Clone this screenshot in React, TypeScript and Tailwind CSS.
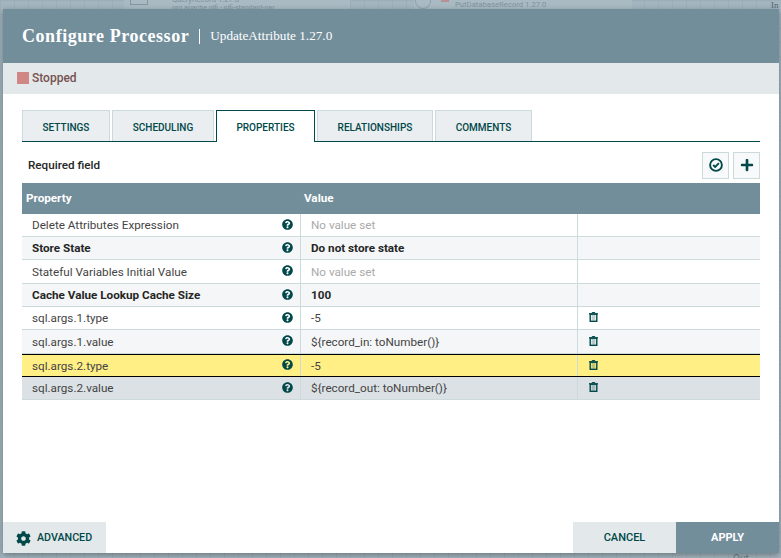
import { FaCog, FaPlus, FaQuestionCircle } from "react-icons/fa";

const tabs = [
  { name: "SETTINGS", width: "w-[88px]" },
  { name: "SCHEDULING", width: "w-[102px]" },
  { name: "PROPERTIES", width: "w-[99px]", active: true },
  { name: "RELATIONSHIPS", width: "w-[116px]" },
  { name: "COMMENTS", width: "w-[97px]" },
];

const rows = [
  { name: "Delete Attributes Expression", value: "No value set", empty: true, h: "h-[23px]", bg: "bg-white" },
  { name: "Store State", value: "Do not store state", bold: true, h: "h-[23px]", bg: "bg-[#f4f6f7]" },
  { name: "Stateful Variables Initial Value", value: "No value set", empty: true, h: "h-[24px]", bg: "bg-white" },
  { name: "Cache Value Lookup Cache Size", value: "100", bold: true, h: "h-[23px]", bg: "bg-[#f4f6f7]" },
  { name: "sql.args.1.type", value: "-5", del: true, h: "h-[23px]", bg: "bg-white" },
  { name: "sql.args.1.value", value: "${record_in: toNumber()}", del: true, h: "h-[24px]", bg: "bg-[#f4f6f7]" },
  { name: "sql.args.2.type", value: "-5", del: true, selected: true, h: "h-[23px]", bg: "bg-[#ffef85]" },
  { name: "sql.args.2.value", value: "${record_out: toNumber()}", del: true, h: "h-[23px]", bg: "bg-[#dbe1e4]" },
];

function TrashIcon() {
  return (
    <svg width="9" height="10" viewBox="0 0 9 10" className="mb-[2px] text-[#004849]">
      <path d="M2.8 1.2 L3.2 0.5 H5.8 L6.2 1.2" fill="none" stroke="currentColor" strokeWidth="1" />
      <rect x="0" y="1.2" width="9" height="1.2" fill="currentColor" />
      <rect x="1.2" y="2.2" width="6.6" height="7.1" fill="none" stroke="currentColor" strokeWidth="1.4" />
      <rect x="2.6" y="3" width="3.8" height="5.6" fill="currentColor" fillOpacity="0.25" />
    </svg>
  );
}

function CheckIcon() {
  return (
    <svg width="14" height="14" viewBox="0 0 14 14" fill="none" stroke="currentColor">
      <circle cx="7" cy="7" r="5.9" strokeWidth="1.9" />
      <path d="M4.2 7 L6.2 9 L9.9 5.2" strokeWidth="1.9" />
    </svg>
  );
}

export default function App() {
  return (
    <div className="relative h-[558px] w-[781px] overflow-hidden bg-[#a3b5bf] bg-[linear-gradient(#9cafb9_1px,transparent_1px),linear-gradient(90deg,#9cafb9_1px,transparent_1px)] bg-[size:14px_14px] pl-[3px] pt-[9px] font-['Roboto',sans-serif]">
      {/* canvas behind the dialog */}
      <div className="absolute left-[124px] top-0 h-[9px] w-[226px] bg-[#a9bac3]" />
      <div className="absolute left-[414px] top-0 h-[9px] w-[218px] bg-[#a9bac3]" />
      <div className="absolute left-[130px] top-0 h-[5px] w-[18px] border-x border-b border-[#8396a0]" />
      <div className="absolute left-[415px] top-0 h-[9px] w-[16px] rounded-b-full border-x border-b border-[#8fa2ac]" />
      <div className="absolute left-[441px] top-0 h-[2px] w-[8px] bg-[#b88f95]" />
      <div className="absolute left-[172px] top-[-4px] text-[7.7px] leading-[8px] text-[#7f929c]">QueryRecord 1.27.0</div>
      <div className="absolute left-[172px] top-[4px] text-[7px] leading-[8px] text-[#7f929c]">org.apache.nifi - nifi-standard-nar</div>
      <div className="absolute left-[455px] top-[1px] text-[7.7px] leading-[8px] text-[#7f929c]">PutDatabaseRecord 1.27.0</div>
      <div className="absolute left-[771px] top-[1px] font-['Liberation_Serif',serif] text-[9px] leading-[9px] text-[#55666f]">In</div>
      <div className="absolute left-[733px] top-[553px] text-[10px] leading-[12px] text-[#6f828c]">Out</div>

      <div className="relative flex h-[544px] w-[776px] flex-col bg-white shadow-[0_2px_6px_rgba(0,0,0,0.35)]">
        <div className="flex h-[54px] items-center bg-[#728e9b] pl-[19px] text-white">
          <span className="font-['Liberation_Serif',serif] text-[18px] font-bold leading-none tracking-[0.55px]">Configure Processor</span>
          <span className="ml-[10px] h-[15px] w-px bg-white" />
          <span className="ml-[10px] font-['Liberation_Serif',serif] text-[13.2px] leading-none">UpdateAttribute 1.27.0</span>
        </div>

        <div className="flex h-[31px] items-center bg-[#e3e8eb] pb-[2px] pl-[14px]">
          <span className="h-3 w-3 bg-[#d18686]" />
          <span className="ml-[3px] text-xs font-medium text-[#775351]">Stopped</span>
        </div>

        <div className="flex flex-1 flex-col px-[19px] pt-4">
          <div className="flex h-[32px] gap-[2px] border-b border-[#004849]">
            {tabs.map((tab) => (
              <div
                key={tab.name}
                className={`flex items-center justify-center pt-[2px] text-[10px] font-medium text-[#004849] ${tab.width} ${
                  tab.active
                    ? "-mb-px border border-b-0 border-[#004849] bg-white"
                    : "border border-b-0 border-[#cddadb] bg-[#eaeef0]"
                }`}
              >
                {tab.name}
              </div>
            ))}
          </div>

          <div className="flex h-[41px] items-center justify-between pt-[5px]">
            <span className="pl-[6px] pt-[2px] text-[11.7px] font-medium text-[#262626]">Required field</span>
            <div className="flex gap-1">
              <button className="flex h-[27px] w-[27px] items-center justify-center border border-[#cddadb] bg-[#f8f9fa] text-[#004849]">
                <CheckIcon />
              </button>
              <button className="flex h-[27px] w-[27px] items-center justify-center border border-[#cddadb] bg-[#f8f9fa] text-[#004849]">
                <FaPlus className="text-sm" />
              </button>
            </div>
          </div>

          <div className="grid h-[31px] grid-cols-[278px_460px] items-center bg-[#728e9b] text-[11.7px] font-bold text-white">
            <span className="pl-1">Property</span>
            <span className="pl-[4px]">Value</span>
          </div>

          {rows.map((row) => (
            <div
              key={row.name}
              className={`grid grid-cols-[278px_277px_183px] border-b text-[11.7px] ${row.h} ${row.bg} ${
                row.selected ? "border-y border-black" : "border-[#cddadb]"
              }`}
            >
              <div className={`flex items-center justify-between pl-[10px] pr-[7px] ${row.bold ? "font-bold text-[#262626]" : "text-[#444444]"}`}>
                <span className="pt-[2px]">{row.name}</span>
                <FaQuestionCircle className="mb-[2px] text-[11px] text-[#004849]" />
              </div>
              <div
                className={`flex items-center border-l border-[#cddadb] pl-[10px] pt-[2px] ${
                  row.empty ? "text-[#aaaaaa]" : row.bold ? "font-bold text-[#262626]" : "text-[#444444]"
                }`}
              >
                {row.value}
              </div>
              <div className="flex items-center border-l border-[#cddadb] pl-[11px]">
                {row.del && <TrashIcon />}
              </div>
            </div>
          ))}
        </div>

        <div className="flex h-[31px] items-stretch justify-between">
          <div className="flex w-[103px] items-center gap-[6px] bg-[#e3e8eb] pl-[13px] pt-[2px] text-[10.7px] font-medium text-[#004849]">
            <FaCog className="text-[15px]" />
            ADVANCED
          </div>
          <div className="flex">
            <div className="flex w-[103px] items-center justify-center bg-[#e3e8eb] pt-px text-[11px] font-medium text-[#004849]">CANCEL</div>
            <div className="flex w-[103px] items-center justify-center bg-[#728e9b] pt-px text-[11px] font-bold text-white">APPLY</div>
          </div>
        </div>
      </div>
    </div>
  );
}
